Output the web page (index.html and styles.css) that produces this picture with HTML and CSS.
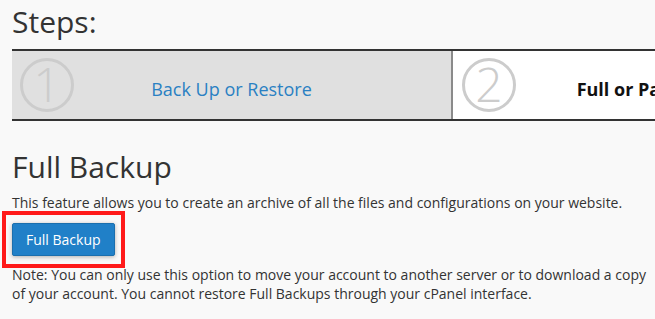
FILE: index.html
```html
<!DOCTYPE html>
<html lang="en">
<head>
<meta charset="utf-8">
<title>Backup Wizard</title>
<link rel="stylesheet" href="styles.css">
</head>
<body>
<div class="page">
  <h2 class="title">Steps:</h2>
  <div class="steps">
    <div class="step step-done">
      <svg class="step-num" width="54" height="54" viewBox="0 0 54 54">
        <circle cx="27" cy="27" r="25.5" fill="none" stroke="#cccccc" stroke-width="3"/>
        <text x="27" y="44" text-anchor="middle" class="digit">1</text>
      </svg>
      <a class="step-link" href="#">Back Up or Restore</a>
    </div>
    <div class="step step-current">
      <svg class="step-num" width="54" height="54" viewBox="0 0 54 54">
        <circle cx="27" cy="27" r="25.5" fill="none" stroke="#cccccc" stroke-width="3"/>
        <text x="27" y="44" text-anchor="middle" class="digit">2</text>
      </svg>
      <span class="step-label">Full or Partial Backup</span>
    </div>
  </div>

  <h2 class="section-title">Full Backup</h2>
  <p class="desc">This feature allows you to create an archive of all the files and configurations on your website.</p>
  <div class="btn-wrap">
    <button class="btn-primary" type="button">Full Backup</button>
  </div>
  <p class="note">Note: You can only use this option to move your account to another server or to download a copy of your account. You cannot restore Full Backups through your cPanel interface.</p>
</div>
</body>
</html>
```

FILE: styles.css
```css
html, body {
  margin: 0;
  padding: 0;
  background: #f9f9f9;
  overflow: hidden;
}

body {
  font-family: "Open Sans", "Liberation Sans", sans-serif;
  color: #333333;
}

.page {
  padding: 0 8px 0 12px;
}

.title {
  font-size: 30px;
  font-weight: 400;
  line-height: 40px;
  margin: 2px 0 7px;
  color: #333333;
}

.steps {
  display: flex;
  border-top: 2px solid #333333;
  border-bottom: 2px solid #333333;
  height: 68px;
  width: 900px;
}

.step {
  position: relative;
  flex: 0 0 440px;
  box-sizing: border-box;
  padding-top: 26px;
  text-align: center;
  font-size: 18px;
  line-height: 24px;
}

.step-done {
  background: #e0e0e0;
  border-right: 2px solid #8a8a8a;
  flex-basis: 441px;
}

.step-current {
  background: #ffffff;
}

.step-num {
  position: absolute;
  left: 8px;
  top: 7px;
}

.step-current .step-num {
  left: 9px;
}

.digit {
  font-family: "Open Sans", "Liberation Sans", sans-serif;
  font-size: 48px;
  font-weight: 300;
  fill: #cccccc;
}

.step-link {
  color: #2a80c3;
  text-decoration: none;
}

.step-label {
  font-weight: 700;
  color: #111111;
}

.section-title {
  font-size: 30px;
  font-weight: 400;
  line-height: 40px;
  margin: 26px 0 6px;
  color: #333333;
}

.desc {
  font-size: 14px;
  line-height: 20px;
  margin: 0;
}

.btn-wrap {
  position: relative;
  display: inline-block;
  margin-top: 10px;
}

.btn-wrap::after {
  content: "";
  position: absolute;
  left: -10px;
  right: -10px;
  top: -12px;
  bottom: -12px;
  border: 4px solid #ff1a1a;
  pointer-events: none;
}

.btn-primary {
  display: block;
  height: 33px;
  box-sizing: border-box;
  padding: 6px 13px;
  font-family: "Open Sans", "Liberation Sans", sans-serif;
  font-size: 14px;
  line-height: 19px;
  color: #ffffff;
  background: #2080c8;
  border: 1px solid #1a6fae;
  border-radius: 2px;
  box-shadow: 0 1px 4px rgba(0, 0, 0, 0.3);
  cursor: pointer;
}

.note {
  font-size: 14px;
  line-height: 18.5px;
  margin: 10px 0 0;
}
```
